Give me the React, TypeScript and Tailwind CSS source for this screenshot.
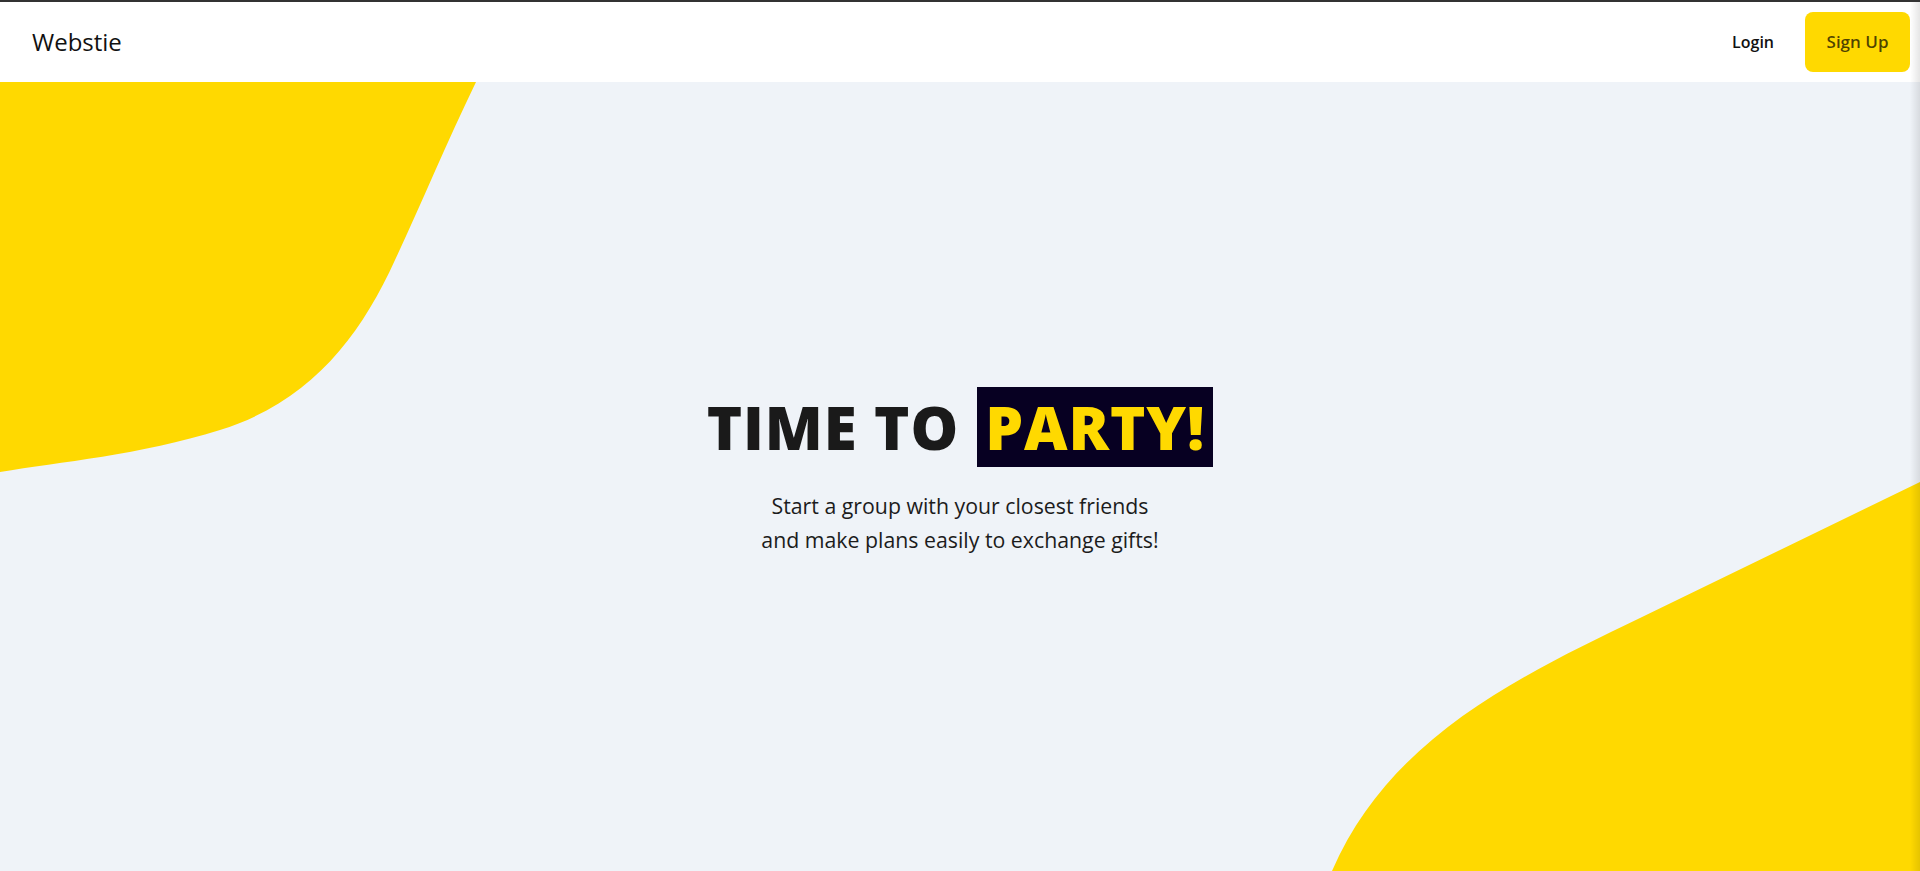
export default function App() {
  return (
    <div
      className="relative flex h-screen flex-col border-t-2 border-[#333333] bg-white"
      style={{ fontFamily: "'Open Sans', 'Noto Sans', sans-serif" }}
    >
      {/* header */}
      <header className="flex h-20 shrink-0 items-center justify-between bg-white pl-8 pr-[10px]">
        <a href="#" className="text-[24px] font-medium text-[#111111]">
          Webstie
        </a>
        <nav className="flex items-center gap-[31px]">
          <a href="#" className="text-[16px] font-semibold text-[#111111]">
            Login
          </a>
          <a
            href="#"
            className="flex h-[60px] w-[105px] items-center justify-center rounded-lg bg-[#ffd900] text-[17px] font-semibold text-black/70"
          >
            Sign Up
          </a>
        </nav>
      </header>

      {/* hero */}
      <section className="relative flex flex-1 items-center justify-center overflow-hidden bg-[#eff3f8]">
        <svg
          className="absolute inset-0 h-full w-full"
          viewBox="0 0 1920 789"
          preserveAspectRatio="none"
        >
          <path
            d="M0 0 H476 C446 62 420 125 395 178 C360 255 310 320 220 348 C140 373 60 380 0 390 Z"
            fill="#ffd900"
          />
          <path
            d="M1920 400 L1640 536 C1520 594 1390 655 1332 789 L1920 789 Z"
            fill="#ffd900"
          />
        </svg>

        <div className="relative mb-[14px] flex flex-col items-center">
          <h1 className="flex items-center text-[60px] font-extrabold tracking-[0.015em] text-[#1a1a1a]">
            <span>TIME TO</span>
            <span className="ml-[18px] inline-flex h-[80px] items-center bg-[#070022] px-2 text-[#ffd900]">
              PARTY!
            </span>
          </h1>
          <p className="mt-[17px] text-center text-[21.3px] leading-[34px] text-[#1c1c1c]">
            Start a group with your closest friends
            <br />
            and make plans easily to exchange gifts!
          </p>
        </div>
      </section>

      {/* right edge shade */}
      <div className="pointer-events-none absolute right-0 top-0 h-full w-[10px] bg-gradient-to-r from-transparent to-black/10" />
    </div>
  );
}
